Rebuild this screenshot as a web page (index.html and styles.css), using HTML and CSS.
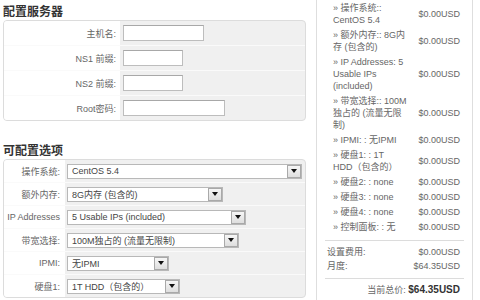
FILE: index.html
```html
<!DOCTYPE html>
<html lang="zh-CN">
<head>
    <meta charset="UTF-8">
    <title>配置服务器</title>
    <link rel="stylesheet" href="styles.css">
</head>
<body>

    <div class="page">
        <div class="main">
            <h2>配置服务器</h2>

            <div class="panel server">
                <div class="row">
                    <label>主机名:</label>
                    <div class="field"><input type="text" class="w-host"></div>
                </div>
                <div class="row">
                    <label>NS1 前缀:</label>
                    <div class="field"><input type="text" class="w-ns"></div>
                </div>
                <div class="row">
                    <label>NS2 前缀:</label>
                    <div class="field"><input type="text" class="w-ns"></div>
                </div>
                <div class="row">
                    <label>Root密码:</label>
                    <div class="field"><input type="password" class="w-root"></div>
                </div>
            </div>

            <h2 class="options-title">可配置选项</h2>

            <div class="panel options">
                <div class="row">
                    <label>操作系统:</label>
                    <div class="field">
                        <div class="select w-os"><span>CentOS 5.4</span><i class="arrow"></i></div>
                    </div>
                </div>
                <div class="row">
                    <label>额外内存:</label>
                    <div class="field">
                        <div class="select w-mem"><span>8G内存 (包含的)</span><i class="arrow"></i></div>
                    </div>
                </div>
                <div class="row">
                    <label>IP Addresses</label>
                    <div class="field">
                        <div class="select w-ip"><span>5 Usable IPs (included)</span><i class="arrow"></i></div>
                    </div>
                </div>
                <div class="row">
                    <label>带宽选择:</label>
                    <div class="field">
                        <div class="select w-bw"><span>100M独占的 (流量无限制)</span><i class="arrow"></i></div>
                    </div>
                </div>
                <div class="row">
                    <label>IPMI:</label>
                    <div class="field">
                        <div class="select w-ipmi"><span>无IPMI</span><i class="arrow"></i></div>
                    </div>
                </div>
                <div class="row">
                    <label>硬盘1:</label>
                    <div class="field">
                        <div class="select w-hdd"><span>1T HDD（包含的）</span><i class="arrow"></i></div>
                    </div>
                </div>
            </div>
        </div>

        <div class="summary">
            <div class="item"><span class="name">» 操作系统::<br>CentOS 5.4</span><span class="price">$0.00USD</span></div>
            <div class="item"><span class="name">» 额外内存:: 8G内<br>存 (包含的)</span><span class="price">$0.00USD</span></div>
            <div class="item"><span class="name">» IP Addresses: 5<br>Usable IPs<br>(included)</span><span class="price">$0.00USD</span></div>
            <div class="item"><span class="name">» 带宽选择:: 100M<br>独占的 (流量无限<br>制)</span><span class="price">$0.00USD</span></div>
            <div class="item"><span class="name">» IPMI: : 无IPMI</span><span class="price">$0.00USD</span></div>
            <div class="item"><span class="name">» 硬盘1: : 1T<br>HDD（包含的）</span><span class="price">$0.00USD</span></div>
            <div class="item"><span class="name">» 硬盘2: : none</span><span class="price">$0.00USD</span></div>
            <div class="item"><span class="name">» 硬盘3: : none</span><span class="price">$0.00USD</span></div>
            <div class="item"><span class="name">» 硬盘4: : none</span><span class="price">$0.00USD</span></div>
            <div class="item"><span class="name">» 控制面板: : 无</span><span class="price">$0.00USD</span></div>

            <div class="totals">
                <div class="line"><span>设置费用:</span><span>$0.00USD</span></div>
                <div class="line"><span>月度:</span><span>$64.35USD</span></div>
            </div>

            <div class="grand">当前总价: <strong>$64.35USD</strong></div>
        </div>
    </div>

</body>
</html>
```

FILE: styles.css
```css
body {
    margin: 0;
    font-family: "Liberation Sans", "Noto Sans CJK SC", sans-serif;
    font-size: 9px;
    color: #666;
    background-color: #fff;
}

.page {
    display: flex;
    height: 300px;
    overflow: hidden;
}

.main {
    width: 303px;
    padding-left: 3px;
}

h2 {
    margin: 3px 0 1px;
    font-family: "Noto Sans CJK SC", sans-serif;
    font-size: 12px;
    line-height: 16px;
    font-weight: bold;
    color: #333;
}

.options-title {
    margin-top: 21px;
}

.panel {
    border: 1px solid #dcdcdc;
    border-radius: 4px;
    background-color: #f0f0f0;
    overflow: hidden;
}

.row {
    display: flex;
    border-bottom: 1px solid #fafafa;
}

.row:last-child {
    border-bottom: none;
}

.row label {
    background-color: #fff;
    text-align: right;
    display: flex;
    align-items: center;
    justify-content: flex-end;
}

.field {
    flex: 1;
    display: flex;
    align-items: center;
}

/* server box */
.server .row {
    height: 24px;
}

.server label {
    width: 112px;
    padding-right: 4px;
}

.server .field {
    padding-left: 3px;
}

input[type="text"], input[type="password"] {
    box-sizing: border-box;
    height: 16px;
    margin: 0;
    padding: 0 3px;
    border: 1px solid #bdbdbd;
    border-top-color: #a8a8a8;
    background-color: #fff;
}

.w-host { width: 81px; }
.w-ns { width: 60px; }
.w-root { width: 102px; }

/* options box */
.options .row {
    height: 22px;
}

.options label {
    width: 56px;
    padding-right: 5px;
}

.options .field {
    padding-left: 2px;
}

.select {
    box-sizing: border-box;
    height: 15px;
    display: flex;
    align-items: center;
    padding-left: 4px;
    border: 1px solid #b8b8b8;
    background-color: #fff;
    color: #444;
    white-space: nowrap;
}

.select span {
    flex: 1;
    overflow: hidden;
}

.arrow {
    box-sizing: border-box;
    width: 14px;
    height: 13px;
    display: flex;
    align-items: center;
    justify-content: center;
    border: 1px solid #a9a9a9;
    background: linear-gradient(#f6f6f6, #dedede);
}

.arrow::after {
    content: "";
    border-top: 4px solid #111;
    border-left: 3.5px solid transparent;
    border-right: 3.5px solid transparent;
}

.w-os { width: 235px; }
.w-mem { width: 156px; }
.w-ip { width: 179px; }
.w-bw { width: 172px; }
.w-ipmi { width: 102px; }
.w-hdd { width: 113px; }

/* order summary */
.summary {
    width: 139px;
    margin-left: 10px;
    padding: 1px 8px 0;
    border-left: 1px solid #dedede;
    border-right: 1px solid #dedede;
    line-height: 12px;
}

.item {
    display: flex;
    justify-content: space-between;
    align-items: center;
    padding: 1px 4px 2px 8px;
}

.name {
    white-space: nowrap;
}

.totals {
    margin-top: 5px;
    padding: 4px 4px 5px 2px;
    border-top: 1px solid #dcdcdc;
    border-bottom: 1px solid #dcdcdc;
}

.line {
    display: flex;
    justify-content: space-between;
    padding: 1px 0;
}

.grand {
    padding: 5px 4px 0 0;
    text-align: right;
}

.grand strong {
    font-size: 10px;
    color: #333;
}
```
